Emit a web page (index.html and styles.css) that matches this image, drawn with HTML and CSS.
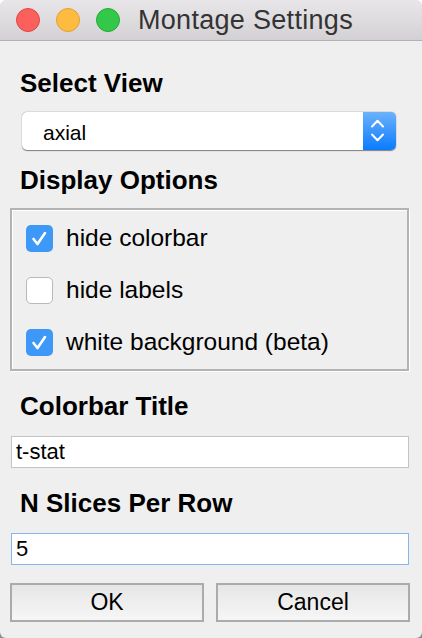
FILE: index.html
```html
<!DOCTYPE html>
<html>
<head>
<meta charset="utf-8">
<link rel="stylesheet" href="styles.css">
</head>
<body>
<div class="window">
  <div class="titlebar">
    <span class="light red"></span>
    <span class="light yellow"></span>
    <span class="light green"></span>
    <span class="title">Montage Settings</span>
  </div>
  <div class="content">
    <div class="heading h-select">Select View</div>
    <div class="select">
      <span class="select-text">axial</span>
      <span class="select-btn">
        <svg width="33" height="38" viewBox="0 0 33 38">
          <path d="M9 14.5 L14.5 8.8 L20 14.5" fill="none" stroke="#fff" stroke-width="2" stroke-linecap="round" stroke-linejoin="round"/>
          <path d="M9 22.5 L14.5 28.2 L20 22.5" fill="none" stroke="#fff" stroke-width="2" stroke-linecap="round" stroke-linejoin="round"/>
        </svg>
      </span>
    </div>
    <div class="heading h-display">Display Options</div>
    <div class="group">
      <div class="row">
        <span class="check on">
          <svg width="27" height="27" viewBox="0 0 27 27"><path d="M7.5 14 L11.5 19 L19 8" fill="none" stroke="#fff" stroke-width="2.6" stroke-linecap="round" stroke-linejoin="round"/></svg>
        </span>
        <span class="label">hide colorbar</span>
      </div>
      <div class="row">
        <span class="check"></span>
        <span class="label">hide labels</span>
      </div>
      <div class="row">
        <span class="check on">
          <svg width="27" height="27" viewBox="0 0 27 27"><path d="M7.5 14 L11.5 19 L19 8" fill="none" stroke="#fff" stroke-width="2.6" stroke-linecap="round" stroke-linejoin="round"/></svg>
        </span>
        <span class="label">white background (beta)</span>
      </div>
    </div>
    <div class="heading h-field">Colorbar Title</div>
    <div class="input">t-stat</div>
    <div class="heading h-field">N Slices Per Row</div>
    <div class="input focused">5</div>
    <div class="buttons">
      <div class="btn">OK</div>
      <div class="btn">Cancel</div>
    </div>
  </div>
</div>
</body>
</html>
```
FILE: styles.css
```css
html {
  margin: 0;
  background: linear-gradient(#ffffff 50%, #8e8e8e 50%);
}
body {
  margin: 0;
  font-family: "Liberation Sans", Arial, sans-serif;
  color: #000;
}
.window {
  width: 422px;
  height: 638px;
  background: #efefef;
  border-radius: 6px;
  overflow: hidden;
}
.titlebar {
  height: 40px;
  border-bottom: 1px solid #b3b1b3;
  background: linear-gradient(#e8e6e8, #d3d1d3);
  display: flex;
  align-items: center;
  padding-left: 16px;
  gap: 16px;
}
.light {
  width: 22px;
  height: 22px;
  border-radius: 50%;
  flex: none;
}
.red { background: #fc605c; border: 1px solid #de4a43; }
.yellow { background: #fdbc40; border: 1px solid #dea236; }
.green { background: #34c84a; border: 1px solid #27aa35; }
.title {
  margin-left: 2px;
  font-size: 27px;
  letter-spacing: 0.3px;
  color: #333;
  line-height: 30px;
}
.content {
  padding: 27px 12px 0 11px;
}
.heading {
  font-size: 26px;
  font-weight: bold;
  line-height: 30px;
  padding-left: 9px;
}
.select {
  margin: 14px 14px 0 11px;
  height: 38px;
  background: #fff;
  border-radius: 5px;
  box-shadow: 0 0.5px 1px rgba(0,0,0,0.45), 0 0 0 0.5px rgba(0,0,0,0.08);
  display: flex;
  align-items: center;
  justify-content: space-between;
}
.select-text {
  font-size: 21px;
  padding-left: 21px;
  padding-top: 3px;
}
.select-btn {
  width: 33px;
  height: 38px;
  background: linear-gradient(#6cb2fb, #0a7bfe);
  border-radius: 0 5px 5px 0;
  display: block;
}
.select-btn svg { display: block; }
.h-display {
  margin-top: 15px;
}
.group {
  margin: 13px 1px 0 -1px;
  border: 2px solid #b3b3b3;
  box-shadow: 1px 1px 0 #fff, inset 1px 1px 0 #fff;
  padding: 2px 0 1px 14px;
}
.row {
  height: 52px;
  display: flex;
  align-items: center;
  gap: 13px;
}
.check {
  width: 27px;
  height: 27px;
  box-sizing: border-box;
  border-radius: 5px;
  background: #fff;
  border: 1px solid #b9b9b9;
  flex: none;
}
.check.on {
  background: #3d98f8;
  border: none;
}
.check svg { display: block; }
.label {
  font-size: 24.5px;
  line-height: 28px;
}
.h-field {
  margin-top: 20px;
}
.input {
  margin-top: 15px;
  height: 30px;
  border: 1px solid #c3c3c3;
  background: #fff;
  font-size: 22px;
  line-height: 30px;
  padding-left: 4px;
  margin-right: 1px;
}
.input.focused {
  border-color: #86b6ec;
}
.buttons {
  margin-top: 18px;
  display: flex;
  gap: 12px;
  margin-left: -1px;
}
.btn {
  flex: 1;
  height: 35px;
  border: 2px solid #ababab;
  background: linear-gradient(#e6e6e6, #f6f6f6);
  font-size: 23px;
  line-height: 35px;
  text-align: center;
}
```
